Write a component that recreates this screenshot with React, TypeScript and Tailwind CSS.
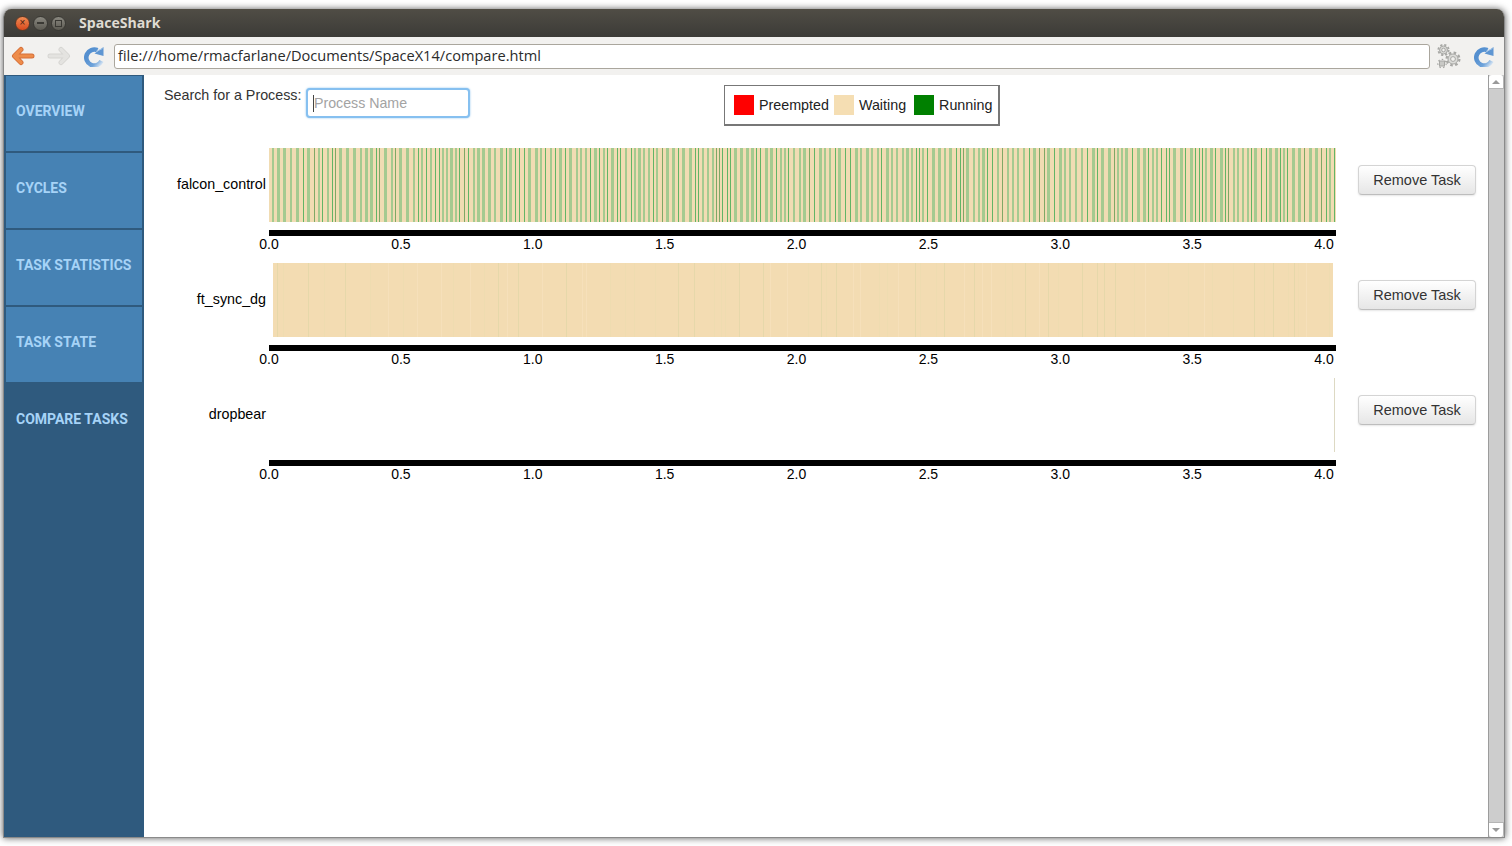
import React from 'react'

type Stripe = { x: number; w: number; c: string }

// small seeded generator so the stripes stay the same on every render
function seeded(seed: number) {
    let s = seed
    return () => {
        s = (s * 16807) % 2147483647
        return s / 2147483647
    }
}

function falconStripes(): Stripe[] {
    const rnd = seeded(4242)
    const out: Stripe[] = []
    let x = 1
    while (x < 1067) {
        x += 2 + Math.floor(rnd() * 3)
        const r = rnd()
        if (r < 0.28) {
            out.push({ x, w: 1, c: '#62b566' })
            x += 1
        } else if (r < 0.36) {
            out.push({ x, w: 1, c: '#7fa866' })
            x += 1
        } else {
            const w = 2 + Math.floor(rnd() * 2)
            out.push({ x, w, c: '#a5ca90' })
            x += w
        }
    }
    return out
}

function syncStripes(): Stripe[] {
    const rnd = seeded(777)
    const out: Stripe[] = []
    let x = 4
    while (x < 1060) {
        x += 4 + Math.floor(rnd() * 22)
        const r = rnd()
        out.push({ x, w: 1, c: r < 0.35 ? '#e6d8aa' : r < 0.65 ? '#efdcb0' : '#f6e0ba' })
    }
    return out
}

function Stripes({ stripes, base, from = 0, to = 1067 }: { stripes: Stripe[]; base: string; from?: number; to?: number }) {
    return (
        <svg width="1067" height="74" className="block" shapeRendering="crispEdges">
            <rect x={from} y="0" width={to - from} height="74" fill={base} />
            {stripes.map((s, i) => (
                <rect key={i} x={s.x} y="0" width={s.w} height="74" fill={s.c} />
            ))}
        </svg>
    )
}

const ticks = ['0.0', '0.5', '1.0', '1.5', '2.0', '2.5', '3.0', '3.5', '4.0']

function ChartRow({ name, children }: { name: string; children: React.ReactNode }) {
    return (
        <div className="flex h-[115px]">
            <div className="w-[122px] h-[74px] flex items-center justify-end text-[14.3px] text-black">{name}</div>
            <div className="ml-[3px] w-[1067px]">
                {children}
                <div className="mt-[8px] h-[6px] bg-black" />
                <div className="ml-[-11px] w-[1077px] flex justify-between text-[14px] leading-[16px] text-black">
                    {ticks.map((t) => (
                        <span key={t} className="w-[22px] text-center">{t}</span>
                    ))}
                </div>
            </div>
            <button className="ml-[22px] mt-[17px] w-[118px] h-[30px] pt-[2px] rounded-[4px] border border-[#d4d4d4] border-b-[#bdbdbd] bg-gradient-to-b from-white to-[#e6e6e6] text-[14.5px] text-[#333] shadow-[0_1px_2px_rgba(0,0,0,0.1)]">
                Remove Task
            </button>
        </div>
    )
}

function NavItem({ label, active = true }: { label: string; active?: boolean }) {
    return (
        <div className={`h-[75px] mb-[2px] pl-[10px] pb-[5px] flex items-center font-['Roboto',sans-serif] font-bold text-[14px] text-[#a6d3f7] ${active ? 'mx-[2px] bg-[#4682b4]' : 'mx-[2px]'}`}>
            {label}
        </div>
    )
}

function ArrowIcon({ color, dark, flip }: { color: string; dark: string; flip?: boolean }) {
    return (
        <svg width="24" height="20" viewBox="0 0 24 20" fill="none" strokeLinecap="round" strokeLinejoin="round" className={flip ? '-scale-x-100' : ''}>
            <path d="M4 10 L21 10 M10 3.5 L3.5 10 L10 16.5" stroke={dark} strokeWidth="5" />
            <path d="M4 10 L21 10 M10 3.5 L3.5 10 L10 16.5" stroke={color} strokeWidth="3.2" />
        </svg>
    )
}

function ReloadIcon() {
    return (
        <svg width="21" height="22" viewBox="0 0 21 22">
            <defs>
                <linearGradient id="reloadFade" x1="0.2" y1="0.3" x2="1" y2="1">
                    <stop offset="0" stopColor="#5590d0" />
                    <stop offset="0.6" stopColor="#6fa3da" />
                    <stop offset="1" stopColor="#dfeaf5" />
                </linearGradient>
            </defs>
            <path d="M17.5 16 A8 8 0 1 1 13.5 5.2" fill="none" stroke="url(#reloadFade)" strokeWidth="4.6" />
            <path d="M19.5 2 L19.5 11 L10.5 8.5 Z" fill="#5f96d2" />
            <path d="M12 6.5 L18.5 3.5" stroke="#a9c8e9" strokeWidth="1" />
        </svg>
    )
}

function GearsIcon() {
    return (
        <svg width="26" height="26" viewBox="0 0 26 26" fill="none" stroke="#a8a8a5">
            <circle cx="7.5" cy="7" r="4" fill="#d9d9d6" strokeWidth="1" />
            <circle cx="7.5" cy="7" r="5.2" strokeWidth="1.8" strokeDasharray="2.2 1.9" />
            <circle cx="7.5" cy="7" r="1.8" fill="#f2f1ef" />
            <circle cx="17" cy="16" r="5" fill="#dcdcd9" strokeWidth="1" />
            <circle cx="17" cy="16" r="6.4" strokeWidth="2.2" strokeDasharray="2.6 2.4" />
            <circle cx="17" cy="16" r="2.4" fill="#f2f1ef" />
            <rect x="3.5" y="18" width="5" height="5" fill="#c9c9c6" strokeWidth="1" />
            <circle cx="6" cy="20.5" r="4.2" strokeWidth="1.2" strokeDasharray="1.6 2.2" />
        </svg>
    )
}

export default function App() {
    const falcon = falconStripes()
    const sync = syncStripes()
    return (
        <div className="h-[846px] w-[1512px] overflow-hidden bg-white pt-[9px] pl-[3px] font-['Liberation_Sans',Arial,sans-serif]">
            <div className="w-[1502px] h-[829px] flex flex-col rounded-t-[8px] overflow-hidden border-x border-b border-[#8a8a8a] shadow-[0_0_7px_rgba(0,0,0,0.65)]">
                {/* title bar */}
                <div className="h-[28px] shrink-0 flex items-center bg-gradient-to-b from-[#504d45] to-[#3c3b37] pl-[11px]">
                    <div className="w-[15px] h-[15px] rounded-full bg-gradient-to-b from-[#f08a52] to-[#d8481b] border border-[#5c3a28] flex items-center justify-center text-[10px] leading-none text-[#4a2010]">×</div>
                    <div className="ml-[3px] w-[15px] h-[15px] rounded-full bg-gradient-to-b from-[#8a8880] to-[#5c5a52] border border-[#3a3934] flex items-center justify-center">
                        <div className="w-[7px] h-[2px] bg-[#3a3934]" />
                    </div>
                    <div className="ml-[3px] w-[15px] h-[15px] rounded-full bg-gradient-to-b from-[#8a8880] to-[#5c5a52] border border-[#3a3934] flex items-center justify-center">
                        <div className="w-[7px] h-[7px] border border-[#3a3934]" />
                    </div>
                    <span className="ml-[13px] font-['Open_Sans',sans-serif] font-bold text-[14.1px] text-[#dfdbd2]">SpaceShark</span>
                </div>
                {/* toolbar */}
                <div className="h-[38px] shrink-0 flex items-center bg-[#f2f1ef] pl-[7px]">
                    <ArrowIcon color="#ee8c4a" dark="#d5703a" />
                    <div className="ml-[12px]">
                        <ArrowIcon color="#e4e3e0" dark="#d6d5d2" flip />
                    </div>
                    <div className="ml-[13px]">
                        <ReloadIcon />
                    </div>
                    <div className="ml-[9px] w-[1316px] h-[25px] rounded-[3px] border border-[#aaa69d] bg-white pl-[3px] flex items-center font-['Open_Sans',sans-serif] text-[14.6px] text-[#2b2b2b]">
                        file:///home/rmacfarlane/Documents/SpaceX14/compare.html
                    </div>
                    <div className="ml-[6px]">
                        <GearsIcon />
                    </div>
                    <div className="ml-[12px]">
                        <ReloadIcon />
                    </div>
                </div>
                {/* page */}
                <div className="flex flex-1 min-h-0 bg-white">
                    <div className="w-[140px] shrink-0 bg-[#2f5a7e] pt-[1px]">
                        <NavItem label="OVERVIEW" />
                        <NavItem label="CYCLES" />
                        <NavItem label="TASK STATISTICS" />
                        <NavItem label="TASK STATE" />
                        <NavItem label="COMPARE TASKS" active={false} />
                    </div>
                    <div className="flex-1 min-w-0">
                        <div className="h-[73px] flex items-start pl-[20px]">
                            <span className="mt-[12px] w-[142px] text-[14.3px] leading-[16px] text-[#333]">Search for a Process:</span>
                            <div className="mt-[13px] w-[164px] h-[30px] rounded-[4px] border-2 border-[#86c0f0] bg-white shadow-[0_0_2px_rgba(102,175,233,0.8)] pl-[5px] flex items-center text-[14.2px] text-[#a3a3a3]">
                                <span className="w-px h-[17px] bg-[#444]" />
                                <span className="pt-[2px]">Process Name</span>
                            </div>
                            <div className="mt-[10px] ml-[254px] w-[276px] h-[41px] border border-[#777] border-r-2 border-b-2 pl-[9px] flex items-center text-[14.3px] text-[#222]">
                                <span className="w-[20px] h-[20px] bg-[#ff0000]" />
                                <span className="ml-[5px] pt-[2px]">Preempted</span>
                                <span className="ml-[5px] w-[20px] h-[20px] bg-[#f5deb3]" />
                                <span className="ml-[5px] pt-[2px]">Waiting</span>
                                <span className="ml-[8px] w-[20px] h-[20px] bg-[#008000]" />
                                <span className="ml-[5px] pt-[2px]">Running</span>
                            </div>
                        </div>
                        <ChartRow name="falcon_control">
                            <Stripes stripes={falcon} base="#f1dcb3" />
                        </ChartRow>
                        <ChartRow name="ft_sync_dg">
                            <Stripes stripes={sync} base="#f3dcb2" from={4} to={1064} />
                        </ChartRow>
                        <ChartRow name="dropbear">
                            <Stripes stripes={[{ x: 1065, w: 1, c: '#ddd9c3' }]} base="#ffffff" />
                        </ChartRow>
                    </div>
                    {/* scrollbar */}
                    <div className="w-[16px] shrink-0 flex flex-col bg-[#cdcdcd] border-l border-[#9c9c9c]">
                        <div className="h-[14px] rounded-t-[3px] bg-white border-b border-r border-[#b5b5b5] flex items-center justify-center">
                            <span className="w-0 h-0 border-x-[4px] border-x-transparent border-b-[4px] border-b-[#999]" />
                        </div>
                        <div className="flex-1" />
                        <div className="h-[15px] rounded-b-[3px] bg-white border-t border-r border-[#b5b5b5] flex items-center justify-center">
                            <span className="w-0 h-0 border-x-[4px] border-x-transparent border-t-[4px] border-t-[#999]" />
                        </div>
                    </div>
                </div>
            </div>
        </div>
    )
}
